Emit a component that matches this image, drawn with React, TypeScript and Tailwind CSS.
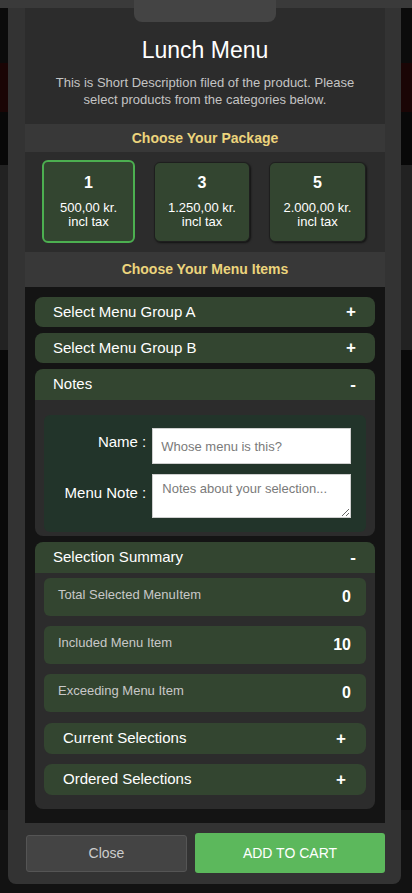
import { useState } from 'react'

const packages = [
  { qty: 1, price: '500,00 kr.', width: 'w-[93px]' },
  { qty: 3, price: '1.250,00 kr.', width: 'w-[96px]' },
  { qty: 5, price: '2.000,00 kr.', width: 'w-[97px]' },
]

const summary = [
  { label: 'Total Selected MenuItem', value: 0 },
  { label: 'Included Menu Item', value: 10 },
  { label: 'Exceeding Menu Item', value: 0 },
]

function Header({ title, open, onClick }: { title: string; open: boolean; onClick: () => void }) {
  return (
    <button
      onClick={onClick}
      className={`flex items-center justify-between w-full bg-[#334530] pl-[18px] pr-[19px] text-[15px] text-white ${
        open ? 'h-[31px] rounded-t-lg' : 'h-[30px] rounded-lg'
      }`}
    >
      <span>{title}</span>
      <span className="text-[17px] font-bold">{open ? '-' : '+'}</span>
    </button>
  )
}

export default function App() {
  const [pkg, setPkg] = useState(0)
  const [open, setOpen] = useState<Record<string, boolean>>({
    a: false,
    b: false,
    notes: true,
    summary: true,
    current: false,
    ordered: false,
  })
  const [name, setName] = useState('')
  const [note, setNote] = useState('')

  const toggle = (k: string) => setOpen(o => ({ ...o, [k]: !o[k] }))

  return (
    <div className="relative w-[412px] h-[893px] overflow-hidden bg-[#0b0b0b] font-[family-name:Liberation_Sans,Arial,sans-serif]">
      {/* page behind the dialog */}
      <div className="h-2 bg-[#3a3a3a]" />
      <div className="h-[55px] bg-[#0b0b0b]" />
      <div className="h-[49px] bg-[#1a0505]" />
      <div className="h-[53px] bg-[#080808]" />
      <div className="h-[185px] bg-[#222222]" />
      <div className="h-[460px] bg-[#0a0a0a]" />
      <div className="h-[83px] bg-[#121212]" />

      {/* dialog */}
      <div className="absolute left-[8px] top-[8px] w-[393px] rounded-b-lg bg-[#333333] pl-[17px] pr-[16px] pb-[11px]">
        <div className="bg-[#2c2c2c]">
          <div className="px-4 pt-[28px] pb-[16px] text-center">
            <h1 className="text-[23px] leading-[28px] text-white">Lunch Menu</h1>
            <p className="mt-[10px] text-[13px] leading-[17px] text-[#c4c4c4]">
              This is Short Description filed of the product. Please select products from the categories below.
            </p>
          </div>

          <div className="flex h-[28px] items-center justify-center bg-[#383838] text-[14px] font-bold text-[#ecd47c]">
            Choose Your Package
          </div>

          <div className="flex h-[100px] items-start gap-[19px] pl-[17px] pt-2">
            {packages.map((p, i) => (
              <button
                key={p.qty}
                onClick={() => setPkg(i)}
                className={`flex flex-col items-center rounded-md bg-[#334530] text-white ${p.width} ${
                  pkg === i
                    ? 'h-[83px] border-2 border-[#4caf50] pt-[11px]'
                    : 'mt-[2px] h-[80px] border border-[#1e1e1e] pt-[10px] shadow-[1px_1px_2px_rgba(0,0,0,0.6)]'
                }`}
              >
                <span className="text-[16px] font-bold leading-[20px]">{p.qty}</span>
                <span className="mt-[8px] text-[13px] leading-[14px]">{p.price}</span>
                <span className="text-[13px] leading-[14px]">incl tax</span>
              </button>
            ))}
          </div>

          <div className="flex h-[35px] items-center justify-center bg-[#383838] text-[14px] font-bold text-[#ecd47c]">
            Choose Your Menu Items
          </div>

          <div className="flex flex-col gap-[6px] bg-[#141414] px-[10px] pt-[10px] pb-[14px]">
            <Header title="Select Menu Group A" open={open.a} onClick={() => toggle('a')} />
            <Header title="Select Menu Group B" open={open.b} onClick={() => toggle('b')} />

            <div>
              <Header title="Notes" open={open.notes} onClick={() => toggle('notes')} />
              {open.notes && (
                <div className="rounded-b-lg bg-[#2c2c2c] px-[9px] pt-[15px] pb-[4px]">
                  <div className="rounded-md bg-[#22342a] pt-[13px] pb-[14px] pr-[15px]">
                    <div className="flex items-center gap-[6px]">
                      <label className="-mt-[7px] w-[103px] text-right text-[15px] text-white">Name :</label>
                      <input
                        value={name}
                        onChange={e => setName(e.target.value)}
                        placeholder="Whose menu is this?"
                        className="h-[36px] w-[200px] border border-[#cfcfcf] bg-white px-[8px] text-[13px] text-[#333] placeholder:text-[#7a7a7a] outline-none"
                      />
                    </div>
                    <div className="mt-[10px] flex items-center gap-[6px]">
                      <label className="-mt-[6px] w-[103px] text-right text-[15px] text-white">Menu Note :</label>
                      <textarea
                        value={note}
                        onChange={e => setNote(e.target.value)}
                        placeholder="Notes about your selection..."
                        className="h-[44px] w-[200px] resize-y border border-[#cfcfcf] bg-white px-[9px] pt-[6px] text-[13px] leading-[16px] text-[#333] placeholder:text-[#7a7a7a] outline-none"
                      />
                    </div>
                  </div>
                </div>
              )}
            </div>

            <div>
              <Header title="Selection Summary" open={open.summary} onClick={() => toggle('summary')} />
              {open.summary && (
                <div className="flex flex-col rounded-b-lg bg-[#2c2c2c] px-[9px] pt-[5px] pb-[14px]">
                  <div className="flex flex-col gap-[10px]">
                    {summary.map(s => (
                      <div
                        key={s.label}
                        className="flex h-[38px] items-center justify-between rounded-md bg-[#334530] pl-[14px] pr-[15px]"
                      >
                        <span className="-mt-[4px] text-[13px] text-[#c8c8c8]">{s.label}</span>
                        <span className="text-[16px] font-bold text-white">{s.value}</span>
                      </div>
                    ))}
                  </div>
                  <div className="mt-[11px] flex flex-col gap-[10px]">
                    {[
                      { k: 'current', t: 'Current Selections' },
                      { k: 'ordered', t: 'Ordered Selections' },
                    ].map(x => (
                      <button
                        key={x.k}
                        onClick={() => toggle(x.k)}
                        className="flex h-[31px] items-center justify-between rounded-lg bg-[#334530] pl-[19px] pr-[20px] text-[15px] text-white"
                      >
                        <span>{x.t}</span>
                        <span className="text-[17px] font-bold">{open[x.k] ? '-' : '+'}</span>
                      </button>
                    ))}
                  </div>
                </div>
              )}
            </div>
          </div>
        </div>

        <div className="flex items-center pt-[10px]">
          <button className="ml-[1px] h-[37px] w-[161px] rounded-[3px] border border-[#555] bg-[#444] text-[14px] text-[#cccccc]">
            Close
          </button>
          <button className="ml-auto h-[40px] w-[190px] rounded-[3px] bg-[#5cb85c] text-[14px] text-white">
            ADD TO CART
          </button>
        </div>
      </div>

      {/* top handle */}
      <div className="absolute left-[134px] top-0 h-[22px] w-[142px] rounded-b-lg bg-[#444]" />
    </div>
  )
}
